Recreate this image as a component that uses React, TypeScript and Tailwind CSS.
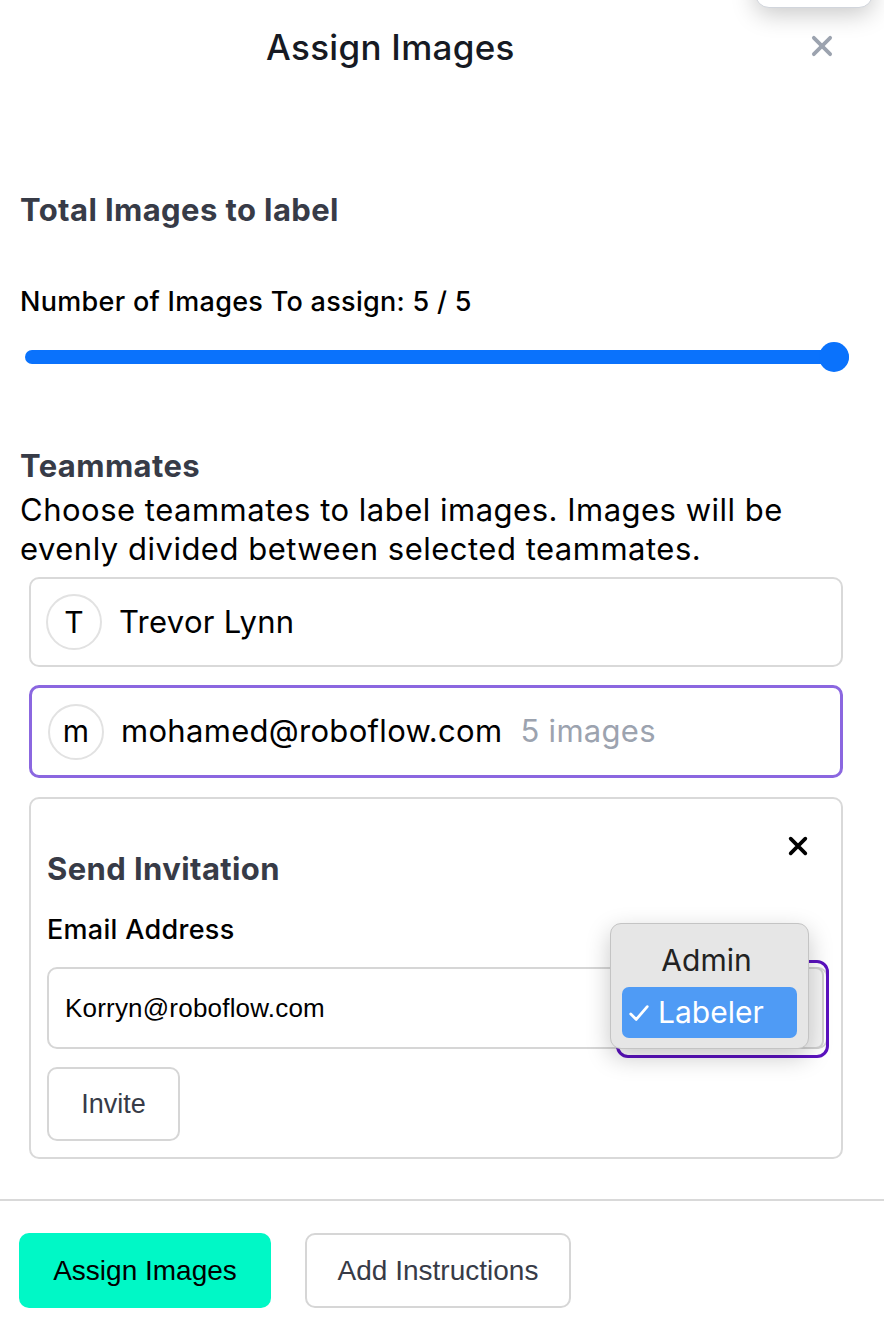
import React from "react";

const App = () => {
  const members = [
    { initial: "T", name: "Trevor Lynn", selected: false, count: "" },
    { initial: "m", name: "mohamed@roboflow.com", selected: true, count: "5 images" },
  ];

  return (
    <div className="relative w-[884px] h-[1332px] overflow-hidden bg-white text-black font-['Inter','Noto_Sans',sans-serif]">
      {/* TOP RIGHT POPOVER EDGE */}
      <div className="absolute -top-[30px] right-[11px] w-[118px] h-[38px] rounded-[14px] bg-white border border-gray-300 shadow-[0_6px_24px_rgba(0,0,0,0.22)]" />

      {/* HEADER */}
      <div className="relative h-[94px] flex items-center pl-[266px]">
        <h1 className="text-[35px] font-medium text-[#161a23] tracking-[0.3px]">
          Assign Images
        </h1>
        <button className="absolute right-[47px] top-[31px] w-[30px] h-[30px] flex items-center justify-center text-[#9ca3af]">
          <svg viewBox="0 0 24 24" className="w-[28px] h-[28px]" fill="none" stroke="currentColor" strokeWidth="3.2" strokeLinecap="round">
            <path d="M5 5 L19 19 M19 5 L5 19" />
          </svg>
        </button>
      </div>

      {/* BODY */}
      <div className="pl-[20px] pr-[41px]">
        <h2 className="mt-[98px] text-[31px] leading-[36px] font-bold text-[#373b47] tracking-[0.4px]">
          Total Images to label
        </h2>

        <p className="mt-[58px] text-[27px] leading-[32px] font-medium text-black tracking-[0.3px]">
          Number of Images To assign: 5 / 5
        </p>

        {/* SLIDER */}
        <div className="mt-[23px] ml-[5px] w-[824px] h-[32px] relative flex items-center">
          <div className="w-full h-[14px] rounded-full bg-[#0a72fc]" />
          <div className="absolute right-0 top-[1px] w-[30px] h-[30px] rounded-full bg-[#0a72fc]" />
        </div>

        <h2 className="mt-[75px] text-[31px] leading-[36px] font-bold text-[#373b47] tracking-[0.4px]">
          Teammates
        </h2>
        <p className="mt-[6px] text-[31px] leading-[39px] text-black tracking-[0.5px] whitespace-nowrap">
          Choose teammates to label images. Images will be
          <br />
          evenly divided between selected teammates.
        </p>

        {/* MEMBERS */}
        <div className="ml-[9px] w-[814px] mt-[9px] flex flex-col gap-[18px]">
          {members.map((m) => (
            <div
              key={m.name}
              className={
                m.selected
                  ? "h-[93px] rounded-[10px] border-[3px] border-[#8b67e0] flex items-center pl-[16px] gap-[17px]"
                  : "h-[90px] rounded-[10px] border-2 border-[#d9d9d9] flex items-center pl-[15px] gap-[17px]"
              }
            >
              <div className="w-[56px] h-[56px] rounded-full border-2 border-[#e2e2e2] flex items-center justify-center text-[30px] text-black">
                {m.initial}
              </div>
              <span className="text-[31px] text-black tracking-[0.3px]">{m.name}</span>
              {m.count && (
                <span className="ml-[1px] text-[31px] text-[#9ca3af] tracking-[0.3px]">{m.count}</span>
              )}
            </div>
          ))}

          {/* SEND INVITATION */}
          <div className="relative mt-[1px] rounded-[10px] border-2 border-[#d9d9d9] pt-[52px] pb-[16px] pl-[16px] pr-[15px]">
            <button className="absolute right-[32px] top-[36px] w-[22px] h-[22px] text-black">
              <svg viewBox="0 0 24 24" className="w-[22px] h-[22px]" fill="none" stroke="currentColor" strokeWidth="4" strokeLinecap="round">
                <path d="M4 4 L20 20 M20 4 L4 20" />
              </svg>
            </button>

            <h3 className="text-[31px] leading-[36px] font-bold text-[#373b47] tracking-[0.4px]">
              Send Invitation
            </h3>
            <p className="mt-[27px] text-[27px] leading-[32px] font-medium text-black tracking-[0.3px]">
              Email Address
            </p>

            {/* EMAIL INPUT + ROLE SELECT */}
            <div className="relative mt-[21px] h-[82px] w-[781px] rounded-[10px] border-2 border-[#d6d6d6] flex items-center pl-[16px]">
              <span className="text-[26px] text-black tracking-[0.2px] font-['Liberation_Sans',Arial,sans-serif]">
                Korryn@roboflow.com
              </span>

              {/* focus ring */}
              <div className="absolute -right-[3px] -top-[9px] w-[213px] h-[98px] rounded-[12px] border-[3px] border-[#5b12bf]" />
              {/* select box */}
              <div className="absolute right-[2px] -top-[2px] w-[199px] h-[82px] rounded-[8px] border-2 border-[#d0d0d0] bg-[#f4f4f4]" />

              {/* dropdown */}
              <div className="absolute left-[561px] -top-[46px] w-[199px] h-[126px] rounded-[11px] border border-[#c4c4c4] bg-[#e6e6e6] shadow-[0_8px_24px_rgba(0,0,0,0.22)] px-[11px] pt-[12px]">
                <div className="h-[48px] flex items-center justify-center pr-[6px] text-[30px] text-[#222]">
                  Admin
                </div>
                <div className="mt-[3px] h-[51px] rounded-[7px] bg-[#4f9bf5] flex items-center pl-[6px] gap-[8px] text-white">
                  <svg viewBox="0 0 24 24" className="w-[22px] h-[22px]" fill="none" stroke="currentColor" strokeWidth="3" strokeLinecap="round" strokeLinejoin="round">
                    <path d="M3 13 L9 19 L21 5" />
                  </svg>
                  <span className="text-[30px]">Labeler</span>
                </div>
              </div>
            </div>

            <button className="mt-[18px] w-[133px] h-[74px] rounded-[10px] border-2 border-[#d6d6d6] text-[27px] text-[#373b47] font-['Liberation_Sans',Arial,sans-serif]">
              Invite
            </button>
          </div>
        </div>
      </div>

      {/* FOOTER */}
      <div className="mt-[40px] border-t-2 border-[#d9d9d9] pt-[32px] pl-[19px] flex gap-[34px]">
        <button className="w-[252px] h-[75px] rounded-[10px] bg-[#00f8c6] text-[28px] text-black font-['Liberation_Sans',Arial,sans-serif]">
          Assign Images
        </button>
        <button className="w-[266px] h-[75px] rounded-[10px] border-2 border-[#d6d6d6] text-[28px] text-[#373b47] font-['Liberation_Sans',Arial,sans-serif]">
          Add Instructions
        </button>
      </div>
    </div>
  );
};

export default App;
